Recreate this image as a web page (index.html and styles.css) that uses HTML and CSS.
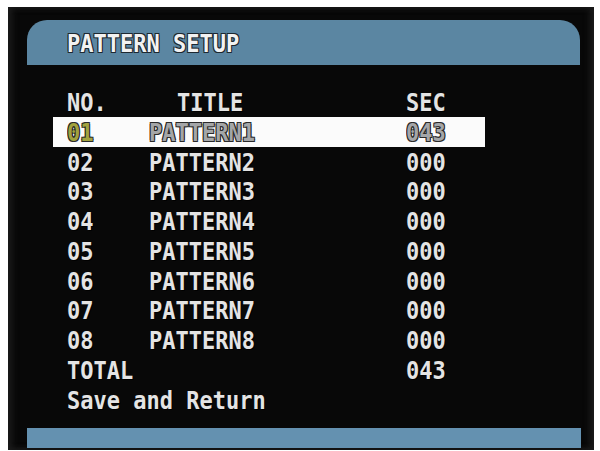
FILE: index.html
```html
<!DOCTYPE html>
<html>
<head>
  <meta charset="utf-8">
  <title>PATTERN SETUP</title>
  <link rel="stylesheet" href="styles.css">
</head>
<body>
  <div class="screen">
    <div class="title_bar"><span class="tall">PATTERN SETUP</span></div>
    <div class="list">
      <div class="row head">
        <div class="no">NO.</div>
        <div class="name name_head">TITLE</div>
        <div class="sec">SEC</div>
      </div>
      <div class="row selected">
        <div class="no">01</div>
        <div class="name">PATTERN1</div>
        <div class="sec">043</div>
      </div>
      <div class="row">
        <div class="no">02</div>
        <div class="name">PATTERN2</div>
        <div class="sec">000</div>
      </div>
      <div class="row">
        <div class="no">03</div>
        <div class="name">PATTERN3</div>
        <div class="sec">000</div>
      </div>
      <div class="row">
        <div class="no">04</div>
        <div class="name">PATTERN4</div>
        <div class="sec">000</div>
      </div>
      <div class="row">
        <div class="no">05</div>
        <div class="name">PATTERN5</div>
        <div class="sec">000</div>
      </div>
      <div class="row">
        <div class="no">06</div>
        <div class="name">PATTERN6</div>
        <div class="sec">000</div>
      </div>
      <div class="row">
        <div class="no">07</div>
        <div class="name">PATTERN7</div>
        <div class="sec">000</div>
      </div>
      <div class="row">
        <div class="no">08</div>
        <div class="name">PATTERN8</div>
        <div class="sec">000</div>
      </div>
      <div class="row">
        <div class="no total">TOTAL</div>
        <div class="name"></div>
        <div class="sec">043</div>
      </div>
      <div class="row">
        <div class="no wide">Save and Return</div>
      </div>
    </div>
    <div class="bottom_bar"></div>
  </div>
</body>
</html>
```
FILE: styles.css
```css
body {
  margin: 0;
  background: #fff;
  font-family: "DejaVu Sans Mono", "Liberation Mono", monospace;
  font-size: 22px;
  font-weight: bold;
}
.screen {
  margin: 7px 0 0 8px;
  width: 586px;
  height: 443px;
  background: #080808;
  display: flex;
  flex-direction: column;
  box-shadow: inset 4px 0 6px #1c1c1c, inset -4px 0 6px #1c1c1c;
}
.title_bar {
  margin: 13px 14px 0 19px;
  height: 45px;
  line-height: 47px;
  padding-left: 40px;
  background: #5b86a2;
  border-radius: 20px 20px 0 0;
  color: #f2f2f2;
  text-shadow: 1px 1px 0 #1d2830, -1px -1px 0 #1d2830, 1px -1px 0 #1d2830, -1px 1px 0 #1d2830;
}
.tall {
  display: inline-block;
  transform: scaleY(1.1);
}
.list {
  margin: 22px 0 0 45px;
  width: 432px;
}
.row {
  display: grid;
  grid-template-columns: 82px 257px 1fr;
  height: 29.75px;
  line-height: 32px;
  padding-left: 14px;
  color: #e4e4e4;
  text-shadow: 1px 1px 0 #000;
  white-space: nowrap;
}
.row > div {
  transform: scaleY(1.12);
}
.name_head {
  padding-left: 28px;
}
.wide {
  grid-column: 1 / 4;
}
.selected {
  background: #fbfbfb;
  color: #a4a6a8;
  text-shadow: 1px 1px 0 #2a2a2a, -1px -1px 0 #2a2a2a, 1px -1px 0 #2a2a2a, -1px 1px 0 #2a2a2a;
}
.selected .no {
  color: #a2a23e;
}
.bottom_bar {
  margin: auto 13px 2px 19px;
  height: 20px;
  background: #6491b0;
}
```
